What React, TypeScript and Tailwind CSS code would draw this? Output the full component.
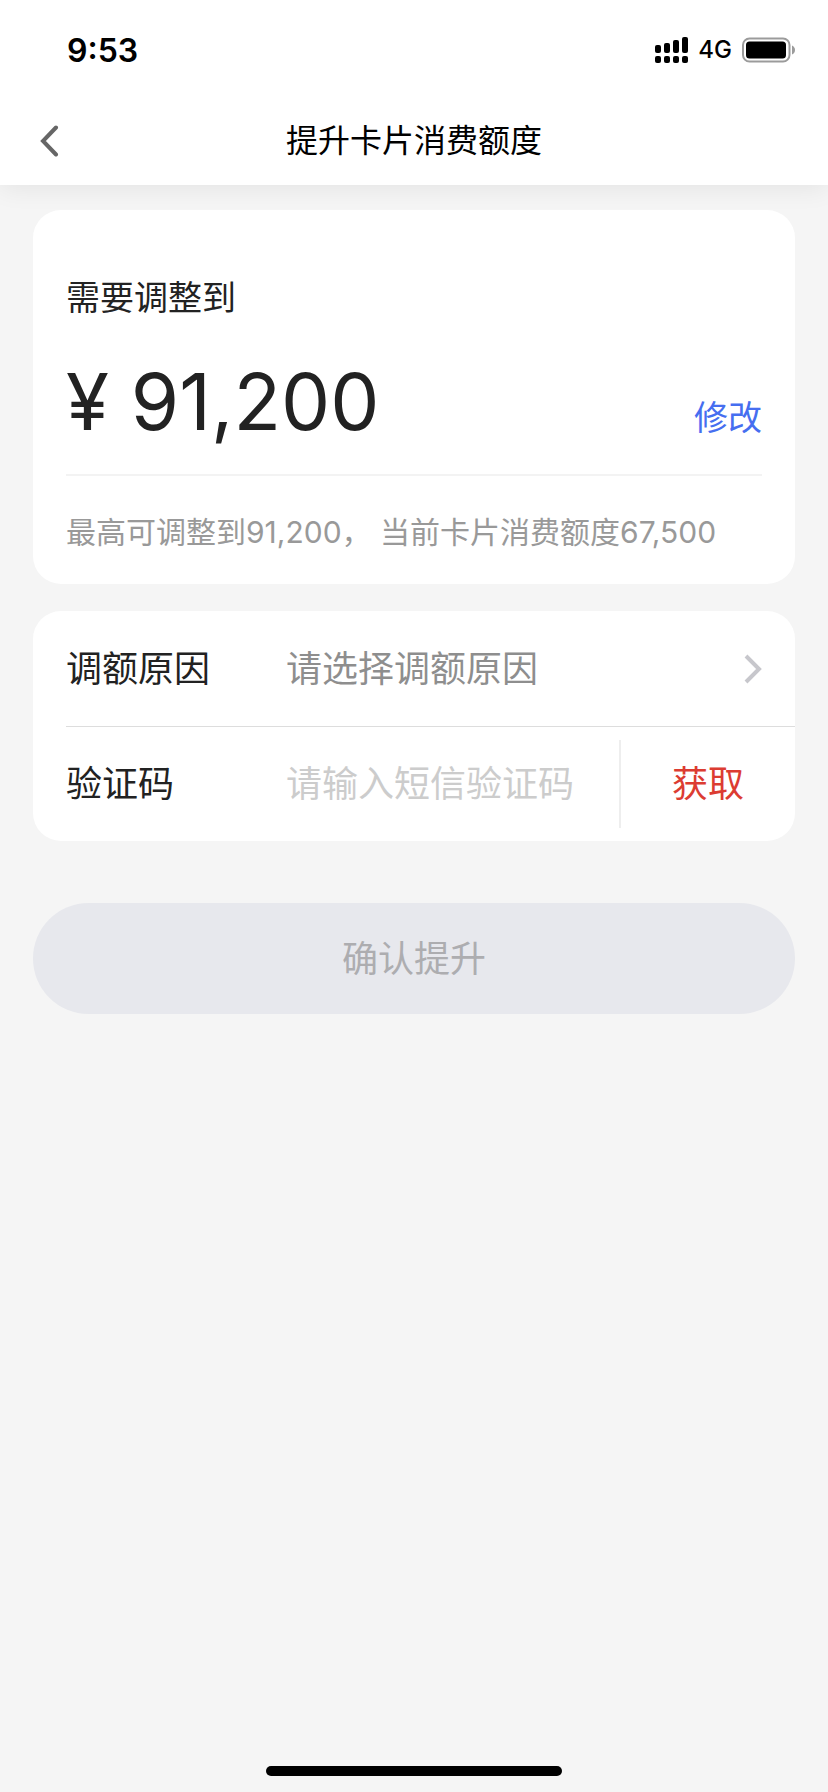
import { useState } from "react";

const reasons = ["旅游出行", "装修购物", "日常消费", "其他"];

function StatusBar() {
  return (
    <div className="flex h-25 items-center justify-between pl-[67px] pr-8">
      <span className="pt-0.5 text-[32px] font-semibold leading-10">9:53</span>
      <div className="flex items-center gap-2.5">
        <svg width="33" height="26" viewBox="0 0 33 26" aria-hidden="true">
          <rect x="0" y="8" width="6" height="8" rx="2" />
          <rect x="9" y="6" width="6" height="10" rx="2" />
          <rect x="18" y="3" width="6" height="13" rx="2" />
          <rect x="27" y="0" width="6" height="16" rx="2" />
          <rect x="0" y="19" width="6" height="7" rx="2" />
          <rect x="9" y="19" width="6" height="7" rx="2" />
          <rect x="18" y="19" width="6" height="7" rx="2" />
          <rect x="27" y="19" width="6" height="7" rx="2" />
        </svg>
        <span className="text-2xl font-medium">4G</span>
        <svg width="54" height="26" viewBox="0 0 54 26" aria-hidden="true">
          <rect x="1" y="1.5" width="46.5" height="23" rx="6.5" fill="none" stroke="#9b9b9b" strokeWidth="2" />
          <rect x="4" y="4.5" width="40" height="17" rx="3.5" />
          <path d="M50 8.500c2 1 3 2.500 3 4.500s-1 3.500-3 4.500z" fill="#9b9b9b" />
        </svg>
      </div>
    </div>
  );
}

export default function App() {
  const [reason, setReason] = useState("");
  const [code, setCode] = useState("");

  return (
    <div className="flex min-h-screen flex-col bg-[#f5f5f5] font-['Inter','Noto_Sans_CJK_SC',sans-serif] text-[#222222]">
      <header className="bg-white text-black shadow-[0_4px_24px_rgba(0,0,0,0.07)]">
        <StatusBar />
        <div className="grid h-[85px] grid-cols-[1fr_auto_1fr] items-center pb-1">
          <button type="button" aria-label="返回" className="ml-8 flex h-12 w-12 items-center pl-2">
            <svg width="20" height="32" viewBox="0 0 20 32" fill="none" stroke="#666666" strokeWidth="4" strokeLinecap="round">
              <path d="M16 2.500 3 16l13 13.500" />
            </svg>
          </button>
          <h1 className="text-[32px] leading-12">提升卡片消费额度</h1>
        </div>
      </header>

      <main className="flex flex-1 flex-col px-[33px] pt-[25px]">
        <section className="rounded-[28px] bg-white px-[33px] pt-16">
          <h2 className="text-[34px] leading-12">需要调整到</h2>
          <div className="mt-10 flex items-end justify-between pb-2">
            <p className="text-[78px] leading-20">¥ 91,200</p>
            <button type="button" className="text-[34px] leading-12 text-[#466ef0]">
              修改
            </button>
          </div>
          <p className="mt-6 border-t-2 border-[#f3f3f3] pt-8 pb-7 text-[30px] leading-12 text-[#999999]">
            最高可调整到91,200， 当前卡片消费额度67,500
          </p>
        </section>

        <form id="limit" className="mt-[27px] rounded-[28px] bg-white pl-[33px] text-4xl">
          <div className="flex h-[116px] items-center border-b border-[#dddddd] pr-8">
            <label htmlFor="reason" className="w-55 shrink-0">
              调额原因
            </label>
            <select
              id="reason"
              value={reason}
              onChange={(e) => setReason(e.target.value)}
              className="h-full min-w-0 flex-1 appearance-none bg-transparent text-[#8e8e8e] outline-none"
            >
              <option value="">请选择调额原因</option>
              {reasons.map((item) => (
                <option key={item}>{item}</option>
              ))}
            </select>
            <svg width="20" height="30" viewBox="0 0 20 30" fill="none" stroke="#c7c7cc" strokeWidth="4" aria-hidden="true">
              <path d="M3 2l13 13L3 28" />
            </svg>
          </div>
          <div className="flex h-[114px] items-center">
            <label htmlFor="code" className="w-55 shrink-0">
              验证码
            </label>
            <input
              id="code"
              inputMode="numeric"
              placeholder="请输入短信验证码"
              value={code}
              onChange={(e) => setCode(e.target.value)}
              className="h-full min-w-0 flex-1 outline-none placeholder:text-[#cccccc]"
            />
            <button type="button" className="h-22 w-44 border-l-2 border-[#eeeeee] text-[#dc3c32]">
              获取
            </button>
          </div>
        </form>

        <button
          type="submit"
          form="limit"
          disabled={!reason || !code}
          className="mt-[62px] h-[111px] rounded-full bg-[#e7e8ed] text-4xl text-[#adadb0]"
        >
          确认提升
        </button>
      </main>

      <div className="mx-auto mb-4 h-2.5 w-74 rounded-full bg-black" />
    </div>
  );
}
